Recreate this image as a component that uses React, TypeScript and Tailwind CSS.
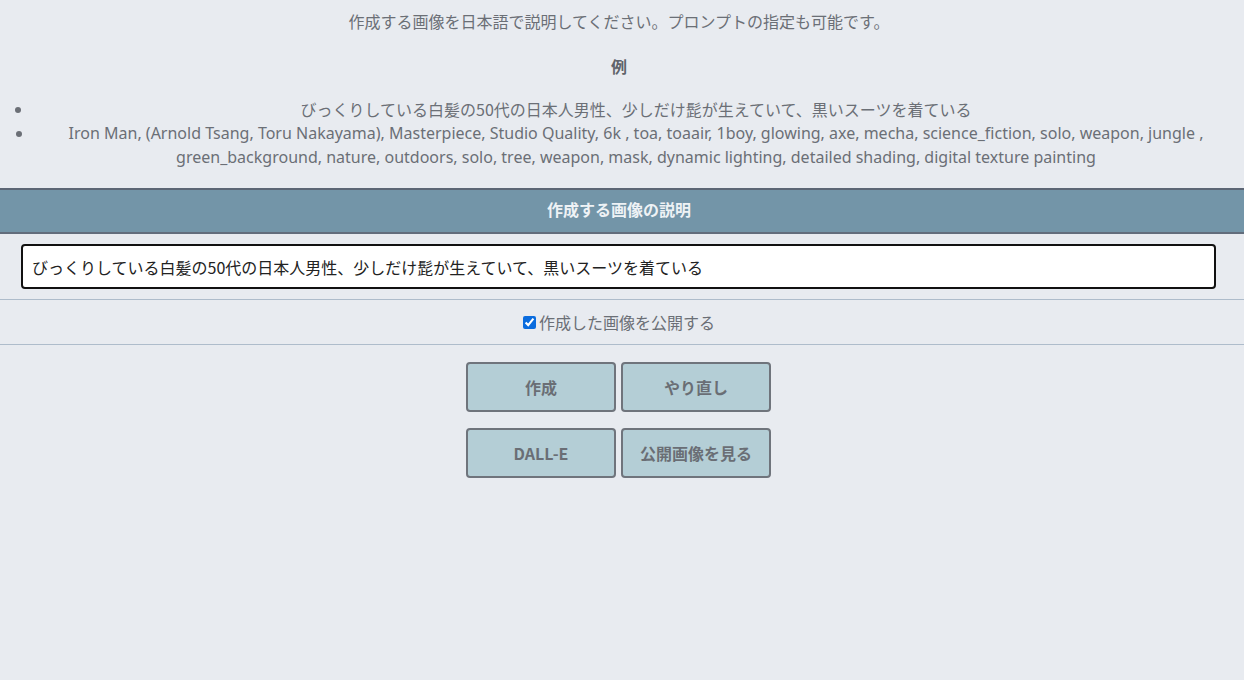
import { useState } from 'react';

const font = { fontFamily: '"Noto Sans CJK JP", "Noto Sans", sans-serif' };

export default function App() {
  const [prompt, setPrompt] = useState(
    'びっくりしている白髪の50代の日本人男性、少しだけ髭が生えていて、黒いスーツを着ている'
  );
  const [publish, setPublish] = useState(true);

  return (
    <div className="min-h-[680px] bg-[#e8ebf0] font-['Noto_Sans_CJK_JP','Noto_Sans',sans-serif] text-[16px] text-[#6b6f76]">
      {/* description */}
      <div className="pr-[6px] text-center leading-[24px]">
        <p className="pt-[9px]">作成する画像を日本語で説明してください。プロンプトの指定も可能です。</p>
        <p className="mt-[21px] font-bold text-[#5f636a]">例</p>
        <ul className="mt-[19px] list-disc pl-[34px] pb-[19px]">
          <li>びっくりしている白髪の50代の日本人男性、少しだけ髭が生えていて、黒いスーツを着ている</li>
          <li className="font-['Noto_Sans','Noto_Sans_CJK_JP',sans-serif]">
            Iron Man, (Arnold Tsang, Toru Nakayama), Masterpiece, Studio Quality, 6k , toa, toaair, 1boy,
            glowing, axe, mecha, science_fiction, solo, weapon, jungle , green_background, nature, outdoors,
            solo, tree, weapon, mask, dynamic lighting, detailed shading, digital texture painting
          </li>
        </ul>
      </div>

      {/* form header */}
      <div className="border-y-2 border-t-[#5c6675] border-b-[#626d7c] bg-[#7395a8] pt-[7px] pb-[11px] pr-[6px] text-center font-bold leading-[24px] text-[#eef2f5]">
        作成する画像の説明
      </div>

      <div className="pl-[21px] pr-[28px] py-[10px]">
        <input
          value={prompt}
          onChange={(e) => setPrompt(e.target.value)}
          style={font}
          className="h-[45px] w-full rounded-[4px] border-2 border-[#111] bg-white px-[9px] text-[16px] text-[#222] outline-none"
        />
      </div>

      <div className="flex h-[46px] items-center justify-center gap-[3px] border-y border-[#aebccb] pr-[6px]">
        <input
          type="checkbox"
          checked={publish}
          onChange={(e) => setPublish(e.target.checked)}
          className="h-[13px] w-[13px] accent-[#0a6cde]"
        />
        <span>作成した画像を公開する</span>
      </div>

      {/* buttons */}
      <div className="flex justify-center pt-[17px] pr-[7px]">
        <div className="grid grid-cols-[150px_150px] gap-x-[5px] gap-y-[16px]">
          {['作成', 'やり直し', 'DALL-E', '公開画像を見る'].map((label) => (
            <button
              key={label}
              style={font}
              className="h-[50px] rounded-[4px] border-2 border-[#6f747c] bg-[#b4ced6] text-[16px] font-bold text-[#6a6e75]"
            >
              {label}
            </button>
          ))}
        </div>
      </div>
    </div>
  );
}
